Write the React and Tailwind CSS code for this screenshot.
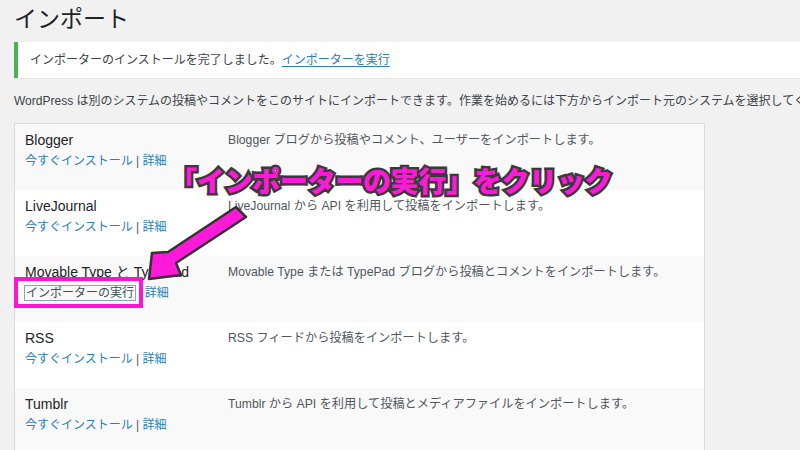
const FONT = '"Liberation Sans", "Noto Sans CJK JP", sans-serif';

const importers = [
  {
    name: 'Blogger',
    desc: 'Blogger ブログから投稿やコメント、ユーザーをインポートします。',
    installed: false,
  },
  {
    name: 'LiveJournal',
    desc: 'LiveJournal から API を利用して投稿をインポートします。',
    installed: false,
  },
  {
    name: 'Movable Type と TypePad',
    desc: 'Movable Type または TypePad ブログから投稿とコメントをインポートします。',
    installed: true,
  },
  {
    name: 'RSS',
    desc: 'RSS フィードから投稿をインポートします。',
    installed: false,
  },
  {
    name: 'Tumblr',
    desc: 'Tumblr から API を利用して投稿とメディアファイルをインポートします。',
    installed: false,
  },
];

function ImporterRow({ item, index }) {
  const striped = index % 2 === 0;
  return (
    <div className={`flex h-[66px] ${striped ? 'bg-[#f9f9f9]' : 'bg-white'}`}>
      <div className="w-[213px] shrink-0 pl-[10px] pt-[6px]">
        <div className="text-[14px] leading-[21px] text-[#1d2327]">{item.name}</div>
        <div className="text-[12px] leading-5 text-[#2c80b5] whitespace-nowrap">
          {item.installed ? (
            <>
              <span className="outline outline-1 outline-[#8aa4b3] px-[1px] text-[#3b4f5c]">インポーターの実行</span>
              <span className="text-[#50575e]"> | </span>
              <span>詳細</span>
            </>
          ) : (
            <>
              <span>今すぐインストール</span>
              <span className="text-[#50575e]"> | </span>
              <span>詳細</span>
            </>
          )}
        </div>
      </div>
      <div className="pt-[6px] text-[12.2px] leading-[21px] text-[#50575e] whitespace-nowrap">{item.desc}</div>
    </div>
  );
}

function Annotation() {
  return (
    <div className="absolute inset-0 pointer-events-none">
      <div
        className="absolute left-[169px] top-[166px] text-[28px] leading-none font-black text-[#ff1ad9] whitespace-nowrap [-webkit-text-stroke:5px_#3a3a3a] [paint-order:stroke_fill] tracking-[-0.3px]"
        style={{ fontFamily: '"Noto Sans CJK JP", sans-serif' }}
      >
        「インポーターの実行」をクリック
      </div>
      <svg className="absolute left-0 top-0" width="800" height="450" viewBox="0 0 800 450">
        <polygon
          points="236,207 246,217 176,263 181,275 149,279 152,253 168,252"
          fill="#ff1ad9"
          stroke="#333"
          strokeWidth="2.5"
          strokeLinejoin="round"
        />
      </svg>
      <div className="absolute left-[14px] top-[277px] w-[129px] h-[31px] border-[4px] border-[#ff14d6]" />
    </div>
  );
}

export default function App() {
  return (
    <div className="relative w-[800px] h-[450px] overflow-hidden bg-[#f1f1f1]" style={{ fontFamily: FONT }}>
      <div className="pl-[14px] pt-[4px]">
        <h1 className="text-[23px] leading-[30px] font-normal text-[#1d2327]">インポート</h1>
        <div className="mt-[8px] h-[36px] flex items-center bg-white border-l-[4px] border-[#46b450] shadow-[0_1px_1px_rgba(0,0,0,0.04)] pl-[12px] text-[12px] text-[#3c434a] whitespace-nowrap">
          インポーターのインストールを完了しました。
          <span className="text-[#2c80b5] underline underline-offset-2">インポーターを実行</span>
        </div>
        <p className="mt-[13px] text-[12px] leading-5 text-[#3c434a] whitespace-nowrap">
          WordPress は別のシステムの投稿やコメントをこのサイトにインポートできます。作業を始めるには下方からインポート元のシステムを選択してください。
        </p>
        <div className="mt-[12px] w-[691px] border border-[#dcdcde]">
          {importers.map((item, i) => (
            <ImporterRow key={item.name} item={item} index={i} />
          ))}
        </div>
      </div>
      <Annotation />
    </div>
  );
}
